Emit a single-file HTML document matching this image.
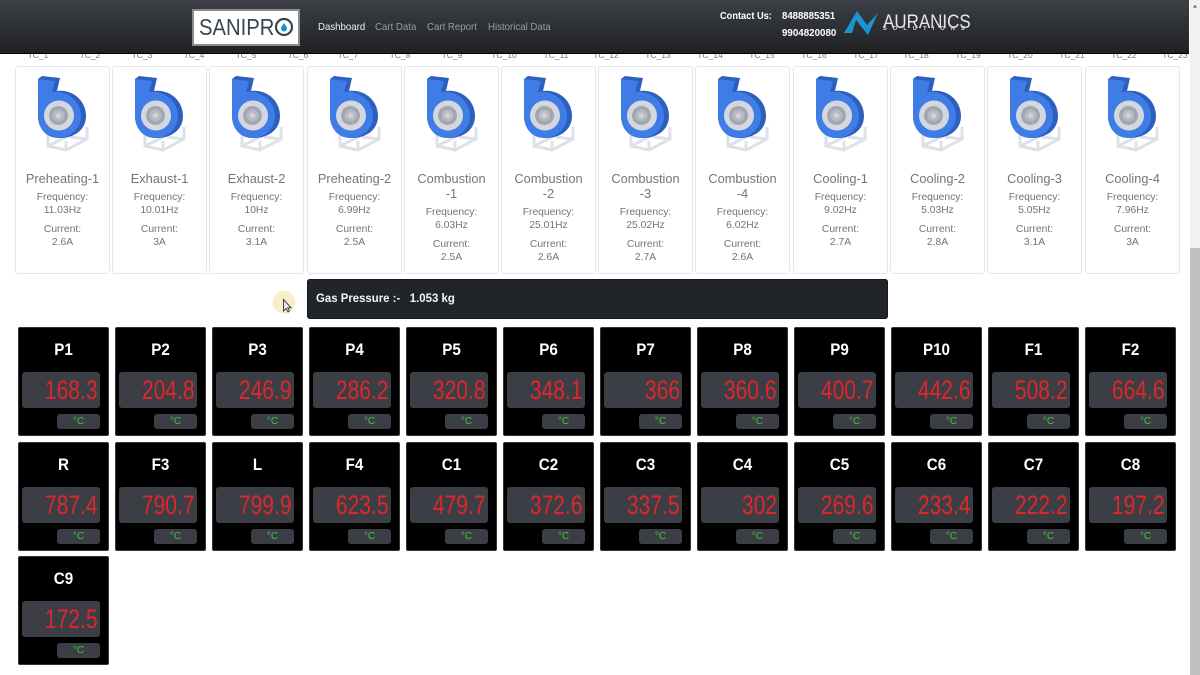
<!DOCTYPE html>
<html><head><meta charset="utf-8"><title>Dashboard</title>
<style>
html,body{margin:0;padding:0;width:1200px;height:675px;overflow:hidden;background:#fff;font-family:"Liberation Sans",sans-serif}
.a{position:absolute;white-space:nowrap}
#hd{position:absolute;left:0;top:0;width:1189px;height:53px;background:linear-gradient(#3c3f45,#1f2125);border-bottom:1px solid #000;z-index:5}
.nav{position:absolute;top:20px;font-size:10.5px;line-height:14px;color:#9a9da1;white-space:nowrap;transform:scaleX(.92);transform-origin:left}
.tc{position:absolute;top:50px;width:40px;text-align:center;font-size:8.5px;line-height:10px;color:#777}
.card{position:absolute;top:66px;width:93px;height:206px;border:1px solid #e6e7e8;border-radius:3px;background:#fff;text-align:center;color:#6c757d;overflow:hidden}
.card svg{position:absolute;left:14px;top:3px}
.card .in{position:absolute;left:0;right:0;top:104px;font-size:10.3px;line-height:13px}
.card h5{margin:0 0 5px;font-size:12.8px;line-height:15px;font-weight:normal;color:#70767c}
.card p{margin:0 0 6px}
.w{position:absolute;width:89px;height:107px;background:#000;border:1px solid #333;border-radius:2px;color:#fff}
.w b{position:absolute;left:0;right:0;top:12px;text-align:center;font-size:16.5px;line-height:20px;transform:scaleX(.92)}
.w i{position:absolute;left:3px;top:44px;width:78px;height:36px;background:#3b3e44;border-radius:3px;font-style:normal;display:block}
.w span{position:absolute;right:2px;top:2px;font-size:27px;line-height:32px;color:#e0262b;transform:scaleX(.78);transform-origin:right center;white-space:nowrap;letter-spacing:0}
.w u{position:absolute;left:38px;top:86px;width:43px;height:15px;background:#3b3e44;border-radius:3px;text-decoration:none;text-align:center;font-size:10px;line-height:15px;color:#45c445}
</style></head><body>
<svg width="0" height="0" style="position:absolute"><defs>
<g id="fan">
<g fill="none" stroke="#dfe1ea" stroke-width="3"><path d="M48,130V146L66,150L87,139V127"/><path d="M48,146L68,136"/><path d="M66,150V141"/><path d="M70,137L87,139"/></g>
<path d="M38,79L42,76L60,78L57,91C72,89 86,100 86,116C86,130 74,138 60,138C46,138 38,128 38,116Z" fill="#2d5fbe"/>
<path d="M38,79L55,81L52,92C68,90 81,102 81,116C81,129 70,138 58,138C46,138 38,128 38,116Z" fill="#3f7ce6"/>
<circle cx="59" cy="115.500" r="15" fill="#d4d7e0"/><circle cx="58.500" cy="115.500" r="9.500" fill="#a2a6ae"/><circle cx="58.500" cy="115.500" r="6" fill="#b6b9c0"/><circle cx="58.500" cy="115.500" r="2.800" fill="#d0d2d8"/>
</g></defs></svg>

<div id="hd">
<div class="a" style="left:192px;top:9px;width:104px;height:33px;border:2px solid #8a8c8e;background:#fff"></div>
<div class="a" style="left:199px;top:14px;font-size:23px;line-height:26px;color:#37454f;transform:scaleX(.88);transform-origin:left">SANIPR</div>
<svg class="a" style="left:274px;top:17px" width="20" height="20"><circle cx="10" cy="10" r="8" fill="none" stroke="#37454f" stroke-width="2.200"/><path d="M10,6C11.500,8.500 13,9.800 13,11.500A3,3 0 0 1 7,11.500C7,9.800 8.500,8.500 10,6Z" fill="#1f8fd0"/></svg>
<div class="nav" style="left:318px;color:#f0f0f0">Dashboard</div>
<div class="nav" style="left:375px">Cart Data</div>
<div class="nav" style="left:427px">Cart Report</div>
<div class="nav" style="left:488px">Historical Data</div>
<div class="a" style="left:720px;top:10px;font-size:10.500px;line-height:13px;font-weight:bold;color:#fff;transform:scaleX(.88);transform-origin:left">Contact Us:</div>
<div class="a" style="left:782px;top:10px;font-size:10.300px;line-height:13px;font-weight:bold;color:#fff;transform:scaleX(.93);transform-origin:left">8488885351</div>
<div class="a" style="left:782px;top:27px;font-size:10.500px;line-height:13px;font-weight:bold;color:#fff;transform:scaleX(.93);transform-origin:left">9904820080</div>
<svg class="a" style="left:843px;top:10px" width="36" height="27"><path d="M1,23L14,1L24,15L35,3L25,25L13,10L9,23Z" fill="#1b94d6"/></svg>
<div class="a" style="left:883px;top:11px;font-size:19.500px;line-height:22px;color:#e8e8ea;transform:scaleX(.87);transform-origin:left">AURANICS</div>
<div class="a" style="left:883px;top:26px;font-size:5.500px;line-height:6px;font-weight:bold;color:#e0e0e0;letter-spacing:6.200px">SOLUTIONS</div>
</div>

<div class="tc" style="left:18px">TC_1</div><div class="tc" style="left:70px">TC_2</div><div class="tc" style="left:122px">TC_3</div><div class="tc" style="left:174px">TC_4</div><div class="tc" style="left:226px">TC_5</div><div class="tc" style="left:278px">TC_6</div><div class="tc" style="left:328px">TC_7</div><div class="tc" style="left:380px">TC_8</div><div class="tc" style="left:432px">TC_9</div><div class="tc" style="left:484px">TC_10</div><div class="tc" style="left:536px">TC_11</div><div class="tc" style="left:586px">TC_12</div><div class="tc" style="left:638px">TC_13</div><div class="tc" style="left:690px">TC_14</div><div class="tc" style="left:742px">TC_15</div><div class="tc" style="left:794px">TC_16</div><div class="tc" style="left:846px">TC_17</div><div class="tc" style="left:896px">TC_18</div><div class="tc" style="left:948px">TC_19</div><div class="tc" style="left:1000px">TC_20</div><div class="tc" style="left:1052px">TC_21</div><div class="tc" style="left:1104px">TC_22</div><div class="tc" style="left:1155px">TC_23</div>

<div class="card" style="left:15px"><svg width="65" height="85" viewBox="30 70 65 85"><use href="#fan"/></svg><div class="in"><h5>Preheating-1</h5><p>Frequency:<br>11.03Hz</p><p>Current:<br>2.6A</p></div></div>
<div class="card" style="left:112px"><svg width="65" height="85" viewBox="30 70 65 85"><use href="#fan"/></svg><div class="in"><h5>Exhaust-1</h5><p>Frequency:<br>10.01Hz</p><p>Current:<br>3A</p></div></div>
<div class="card" style="left:209px"><svg width="65" height="85" viewBox="30 70 65 85"><use href="#fan"/></svg><div class="in"><h5>Exhaust-2</h5><p>Frequency:<br>10Hz</p><p>Current:<br>3.1A</p></div></div>
<div class="card" style="left:307px"><svg width="65" height="85" viewBox="30 70 65 85"><use href="#fan"/></svg><div class="in"><h5>Preheating-2</h5><p>Frequency:<br>6.99Hz</p><p>Current:<br>2.5A</p></div></div>
<div class="card" style="left:404px"><svg width="65" height="85" viewBox="30 70 65 85"><use href="#fan"/></svg><div class="in"><h5>Combustion<br>-1</h5><p>Frequency:<br>6.03Hz</p><p>Current:<br>2.5A</p></div></div>
<div class="card" style="left:501px"><svg width="65" height="85" viewBox="30 70 65 85"><use href="#fan"/></svg><div class="in"><h5>Combustion<br>-2</h5><p>Frequency:<br>25.01Hz</p><p>Current:<br>2.6A</p></div></div>
<div class="card" style="left:598px"><svg width="65" height="85" viewBox="30 70 65 85"><use href="#fan"/></svg><div class="in"><h5>Combustion<br>-3</h5><p>Frequency:<br>25.02Hz</p><p>Current:<br>2.7A</p></div></div>
<div class="card" style="left:695px"><svg width="65" height="85" viewBox="30 70 65 85"><use href="#fan"/></svg><div class="in"><h5>Combustion<br>-4</h5><p>Frequency:<br>6.02Hz</p><p>Current:<br>2.6A</p></div></div>
<div class="card" style="left:793px"><svg width="65" height="85" viewBox="30 70 65 85"><use href="#fan"/></svg><div class="in"><h5>Cooling-1</h5><p>Frequency:<br>9.02Hz</p><p>Current:<br>2.7A</p></div></div>
<div class="card" style="left:890px"><svg width="65" height="85" viewBox="30 70 65 85"><use href="#fan"/></svg><div class="in"><h5>Cooling-2</h5><p>Frequency:<br>5.03Hz</p><p>Current:<br>2.8A</p></div></div>
<div class="card" style="left:987px"><svg width="65" height="85" viewBox="30 70 65 85"><use href="#fan"/></svg><div class="in"><h5>Cooling-3</h5><p>Frequency:<br>5.05Hz</p><p>Current:<br>3.1A</p></div></div>
<div class="card" style="left:1085px"><svg width="65" height="85" viewBox="30 70 65 85"><use href="#fan"/></svg><div class="in"><h5>Cooling-4</h5><p>Frequency:<br>7.96Hz</p><p>Current:<br>3A</p></div></div>

<svg class="a" style="left:272px;top:290px" width="26" height="26"><circle cx="12" cy="12" r="11.500" fill="#f8eecb"/><path d="M11.500,9.500V21L14,18.500L16,22L17.500,21L15.800,17.800H19Z" fill="#eee" stroke="#444" stroke-width="1"/></svg>
<div class="a" style="left:307px;top:279px;width:581px;height:40px;background:#212529;border:0;border-radius:3px;box-sizing:border-box;box-shadow:inset 0 0 0 1px #16181b"></div>
<div class="a" style="left:316px;top:291px;font-size:12px;line-height:15px;font-weight:bold;color:#f5f5f5;white-space:pre;transform:scaleX(.95);transform-origin:left">Gas Pressure :-   1.053 kg</div>

<div class="w" style="left:18px;top:327px"><b>P1</b><i><span>168.3</span></i><u>°C</u></div>
<div class="w" style="left:115px;top:327px"><b>P2</b><i><span>204.8</span></i><u>°C</u></div>
<div class="w" style="left:212px;top:327px"><b>P3</b><i><span>246.9</span></i><u>°C</u></div>
<div class="w" style="left:309px;top:327px"><b>P4</b><i><span>286.2</span></i><u>°C</u></div>
<div class="w" style="left:406px;top:327px"><b>P5</b><i><span>320.8</span></i><u>°C</u></div>
<div class="w" style="left:503px;top:327px"><b>P6</b><i><span>348.1</span></i><u>°C</u></div>
<div class="w" style="left:600px;top:327px"><b>P7</b><i><span>366</span></i><u>°C</u></div>
<div class="w" style="left:697px;top:327px"><b>P8</b><i><span>360.6</span></i><u>°C</u></div>
<div class="w" style="left:794px;top:327px"><b>P9</b><i><span>400.7</span></i><u>°C</u></div>
<div class="w" style="left:891px;top:327px"><b>P10</b><i><span>442.6</span></i><u>°C</u></div>
<div class="w" style="left:988px;top:327px"><b>F1</b><i><span>508.2</span></i><u>°C</u></div>
<div class="w" style="left:1085px;top:327px"><b>F2</b><i><span>664.6</span></i><u>°C</u></div>

<div class="w" style="left:18px;top:442px"><b>R</b><i><span>787.4</span></i><u>°C</u></div>
<div class="w" style="left:115px;top:442px"><b>F3</b><i><span>790.7</span></i><u>°C</u></div>
<div class="w" style="left:212px;top:442px"><b>L</b><i><span>799.9</span></i><u>°C</u></div>
<div class="w" style="left:309px;top:442px"><b>F4</b><i><span>623.5</span></i><u>°C</u></div>
<div class="w" style="left:406px;top:442px"><b>C1</b><i><span>479.7</span></i><u>°C</u></div>
<div class="w" style="left:503px;top:442px"><b>C2</b><i><span>372.6</span></i><u>°C</u></div>
<div class="w" style="left:600px;top:442px"><b>C3</b><i><span>337.5</span></i><u>°C</u></div>
<div class="w" style="left:697px;top:442px"><b>C4</b><i><span>302</span></i><u>°C</u></div>
<div class="w" style="left:794px;top:442px"><b>C5</b><i><span>269.6</span></i><u>°C</u></div>
<div class="w" style="left:891px;top:442px"><b>C6</b><i><span>233.4</span></i><u>°C</u></div>
<div class="w" style="left:988px;top:442px"><b>C7</b><i><span>222.2</span></i><u>°C</u></div>
<div class="w" style="left:1085px;top:442px"><b>C8</b><i><span>197.2</span></i><u>°C</u></div>

<div class="w" style="left:18px;top:556px"><b>C9</b><i><span>172.5</span></i><u>°C</u></div>

<div class="a" style="left:1190px;top:0;width:10px;height:675px;background:#f1f1f1"></div>
<div class="a" style="left:1190px;top:248px;width:10px;height:427px;background:#c1c1c1"></div>
<svg class="a" style="left:1190px;top:2px" width="10" height="8"><path d="M3,5.500L5,3L7,5.500Z" fill="#505050"/></svg>
</body></html>
